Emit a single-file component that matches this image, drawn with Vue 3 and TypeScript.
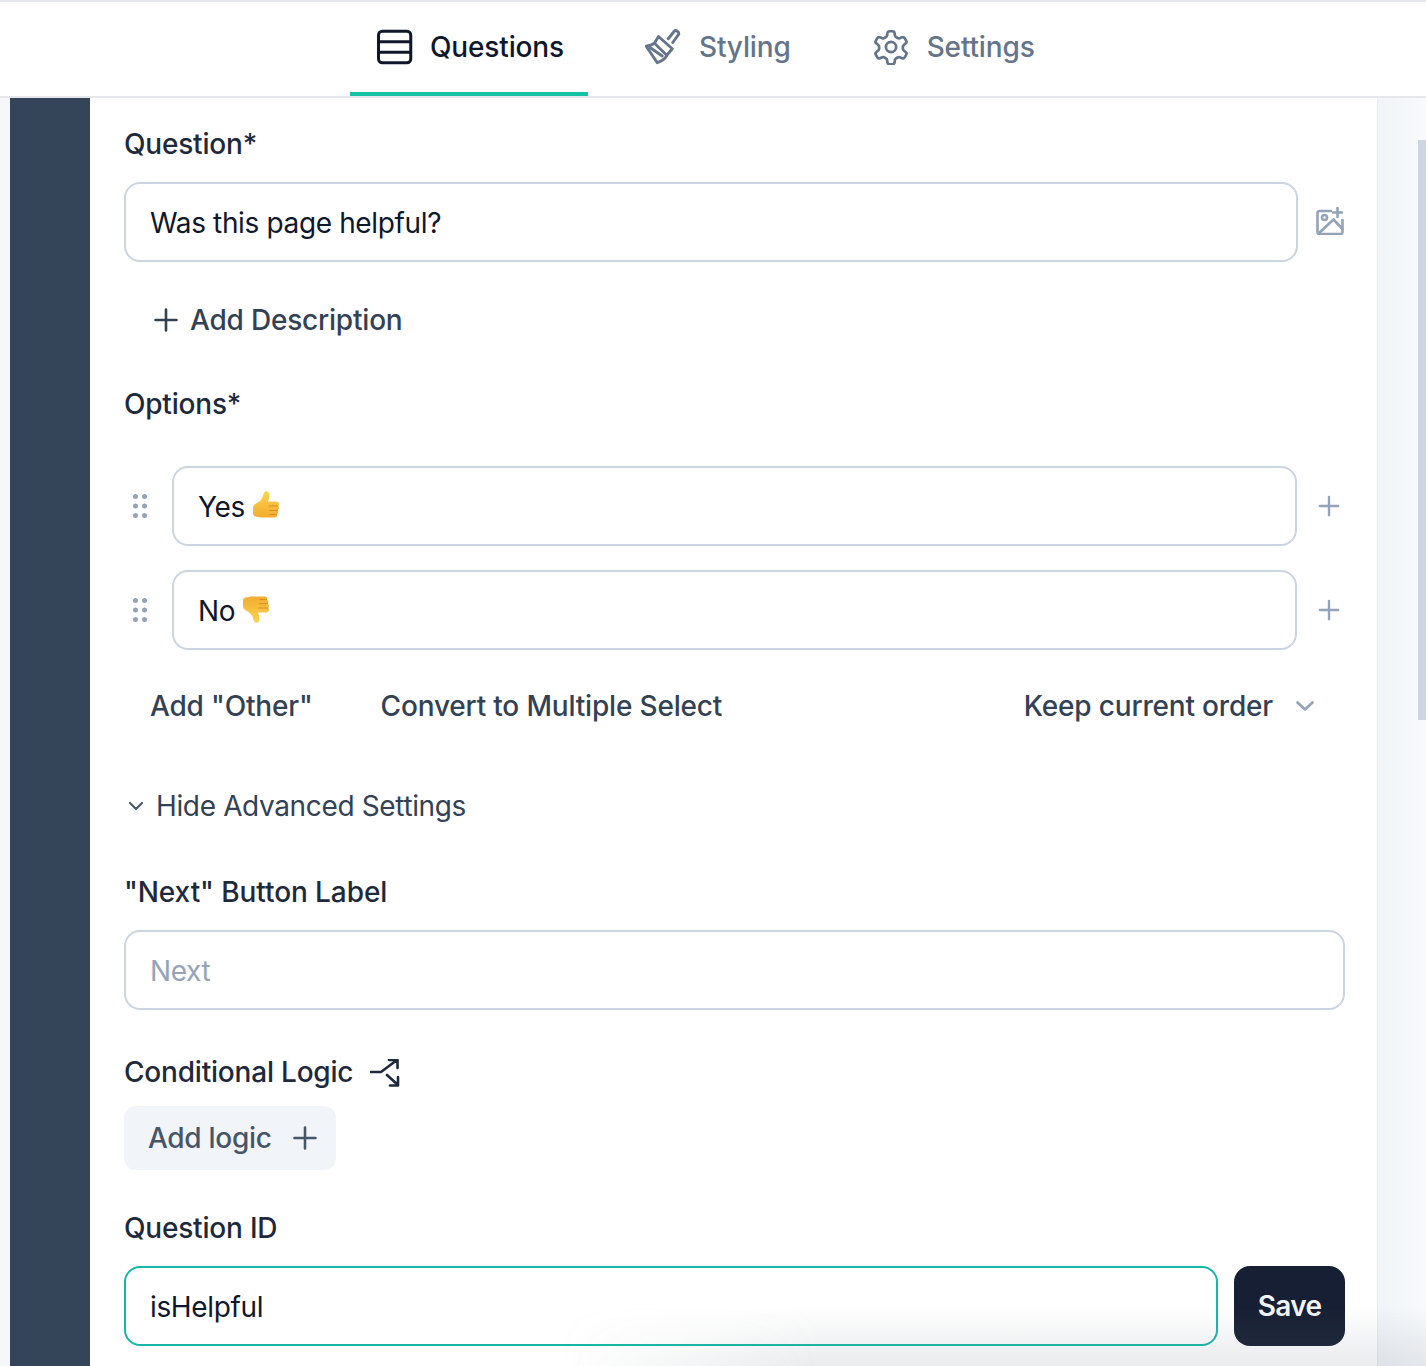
<script setup lang="ts">
import { ref } from 'vue'

interface Tab {
  name: string
  icon: string
}

const tabs: Tab[] = [
  { name: 'Questions', icon: 'rows' },
  { name: 'Styling', icon: 'brush' },
  { name: 'Settings', icon: 'gear' },
]
const activeTab = ref('Questions')

const options = [
  { label: 'Yes', up: true },
  { label: 'No', up: false },
]
</script>

<template>
  <div class="page">
    <nav class="tabs">
      <button
        v-for="tab in tabs"
        :key="tab.name"
        class="tab"
        :class="{ active: activeTab === tab.name }"
        @click="activeTab = tab.name"
      >
        <svg v-if="tab.icon === 'rows'" class="tab-icon" viewBox="0 0 24 24" fill="none" stroke="currentColor" stroke-width="2" stroke-linejoin="round">
          <rect x="1" y="1.500" width="21.500" height="21" rx="2.500" />
          <path d="M1 8.500h21.500M1 15.500h21.500" />
        </svg>
        <svg v-else-if="tab.icon === 'brush'" class="tab-icon" viewBox="0 0 24 24" fill="none" stroke="currentColor" stroke-width="1.900" stroke-linecap="round" stroke-linejoin="round">
          <path d="M15.500 6.500 19.500 1.500c1.100-1.300 3.700.6 2.800 2.300L18.500 9" />
          <path d="M9 5l9.200 8.200-3.700 4.300c-.5 1.800-2.500 3.500-6.300 5L.8 11.500C3.500 11 5.500 10 6.300 9.500z" />
          <path d="M6.300 9.500l8.200 8M3.500 12.500l8 5.500" />
        </svg>
        <svg v-else class="tab-icon" viewBox="0 0 24 24" fill="none" stroke="currentColor" stroke-width="1.800" stroke-linecap="round" stroke-linejoin="round">
          <path d="M9.600 2.800c.1-.8.8-1.300 1.500-1.300h1.800c.7 0 1.400.5 1.500 1.300l.2 1.600c.1.500.4.900.9 1.100l.9.500c.4.200.9.300 1.400.1l1.500-.6c.7-.3 1.500 0 1.900.7l.9 1.600c.4.600.2 1.400-.4 1.900l-1.200 1c-.4.300-.6.800-.6 1.300v1c0 .5.200 1 .6 1.300l1.200 1c.6.500.8 1.300.4 1.900l-.9 1.600c-.4.700-1.200 1-1.900.7l-1.500-.6c-.5-.2-1-.1-1.400.1l-.9.500c-.5.200-.8.600-.9 1.100l-.2 1.600c-.1.800-.8 1.300-1.500 1.300h-1.800c-.7 0-1.400-.5-1.500-1.300l-.2-1.600c-.1-.5-.4-.9-.9-1.100l-.9-.5c-.4-.2-.9-.3-1.400-.1l-1.500.6c-.7.300-1.500 0-1.900-.7l-.9-1.600c-.4-.6-.2-1.400.4-1.900l1.200-1c.4-.3.600-.8.600-1.300v-1c0-.5-.2-1-.6-1.300l-1.200-1c-.6-.5-.8-1.300-.4-1.900l.9-1.600c.4-.7 1.200-1 1.900-.7l1.500.6c.5.200 1 .1 1.400-.1l.9-.5c.5-.2.800-.6.900-1.100z" />
          <circle cx="12" cy="12" r="3.400" />
        </svg>
        <span>{{ tab.name }}</span>
      </button>
    </nav>

    <div class="body">
      <div class="rail"></div>
      <main class="card">
        <label class="label first">Question*</label>
        <div class="row">
          <div class="field grow">Was this page helpful?</div>
          <svg class="image-icon" viewBox="0 0 28 28" fill="none" stroke="#94a3b8" stroke-width="2.600" stroke-linecap="round" stroke-linejoin="round">
            <path d="M15 4H3.500A2 2 0 0 0 1.500 6v19a2 2 0 0 0 2 2h21a2 2 0 0 0 2-2V13" />
            <circle cx="8.500" cy="10.500" r="2.500" />
            <path d="M3 26 17.500 12.500l9 9.500M21.500 1v9M17 5.500h9" />
          </svg>
        </div>

        <div class="add-desc">
          <svg class="plus" viewBox="0 0 24 24" fill="none" stroke="currentColor" stroke-width="2.600" stroke-linecap="round">
            <path d="M12 1.500v21M1.500 12h21" />
          </svg>
          <span>Add Description</span>
        </div>

        <label class="label options-label">Options*</label>
        <div class="options">
          <div v-for="opt in options" :key="opt.label" class="option">
            <svg class="drag" viewBox="0 0 14 24" fill="#94a3b8">
              <circle cx="2.500" cy="2.500" r="2.500" />
              <circle cx="11.500" cy="2.500" r="2.500" />
              <circle cx="2.500" cy="12" r="2.500" />
              <circle cx="11.500" cy="12" r="2.500" />
              <circle cx="2.500" cy="21.500" r="2.500" />
              <circle cx="11.500" cy="21.500" r="2.500" />
            </svg>
            <div class="field grow">
              <span>{{ opt.label }}</span>
              <svg class="thumb" :class="{ down: !opt.up }" viewBox="0 0 28 30">
                <defs>
                  <linearGradient id="thumbFill" x1="0" y1="0" x2="0" y2="1">
                    <stop offset="0" stop-color="#fcd450" />
                    <stop offset="1" stop-color="#f3ac30" />
                  </linearGradient>
                </defs>
                <path d="M1 18c0-2 1-3 3-4.500C7.500 12 10.500 9 11.500 4.500 12-.5 17.500.8 17.500 5c0 2.500-.8 4.500-1.500 6.500h8c2 0 3 1 3 2.500 0 1-.4 1.600-1 2 .6.500 1 1.200 1 2 0 1-.5 1.700-1.200 2.100.4.500.6 1 .6 1.600 0 1-.6 1.800-1.400 2.200.2.300.3.700.3 1.100 0 1.500-1 2.500-2.800 2.500H10c-2 0-3-.8-5-.8-2.500 0-4-1.500-4-3.700z" fill="url(#thumbFill)" />
                <path d="M17 16h9M17.500 20.300h8M18 24.400h6.500" stroke="#d98a1f" stroke-width="1" fill="none" stroke-linecap="round" />
              </svg>
            </div>
            <svg class="plus small" viewBox="0 0 24 24" fill="none" stroke="#94a3b8" stroke-width="2.600" stroke-linecap="round">
              <path d="M12 2v20M2 12h20" />
            </svg>
          </div>
        </div>

        <div class="option-actions">
          <span class="other">Add "Other"</span>
          <span class="convert">Convert to Multiple Select</span>
          <span class="order">
            Keep current order
            <svg class="order-chevron" viewBox="0 0 18 10" fill="none" stroke="#94a3b8" stroke-width="2.600" stroke-linecap="round" stroke-linejoin="round">
              <path d="m1.500 1.500 7.500 7 7.500-7" />
            </svg>
          </span>
        </div>

        <div class="advanced">
          <svg class="adv-chevron" viewBox="0 0 14 8" fill="none" stroke="#475569" stroke-width="2" stroke-linecap="round" stroke-linejoin="round">
            <path d="m1 1 6 6 6-6" />
          </svg>
          <span>Hide Advanced Settings</span>
        </div>

        <label class="label next-label">"Next" Button Label</label>
        <div class="field wide placeholder">Next</div>

        <div class="label logic-label">
          <span>Conditional Logic</span>
          <svg class="split" viewBox="0 0 30 28" fill="none" stroke="#1e293b" stroke-width="2.600" stroke-linecap="round" stroke-linejoin="round">
            <path d="M1 13h10l16-12M19 1h8.500v8M17 16l11 10M28 18v8.500h-8" />
          </svg>
        </div>
        <button class="add-logic">
          <span>Add logic</span>
          <svg class="plus" viewBox="0 0 24 24" fill="none" stroke="currentColor" stroke-width="2.600" stroke-linecap="round">
            <path d="M12 1.500v21M1.500 12h21" />
          </svg>
        </button>

        <label class="label id-label">Question ID</label>
        <div class="id-row">
          <div class="field grow focus">isHelpful</div>
          <button class="save">Save</button>
        </div>
      </main>
      <div class="gutter">
        <div class="scroll-thumb"></div>
      </div>
    </div>
    <div class="fade"></div>
  </div>
</template>

<style>
body {
  margin: 0;
  overflow: hidden;
}
</style>

<style scoped>
.page {
  position: relative;
  width: 1426px;
  height: 1366px;
  overflow: hidden;
  background: #f5f7fa;
  font-family: Inter, "Liberation Sans", sans-serif;
  font-size: 28px;
  letter-spacing: -0.36px;
  color: #1e293b;
}

.tabs {
  box-sizing: border-box;
  height: 98px;
  padding-left: 350px;
  display: flex;
  background: #fff;
  border-top: 2px solid #e5e7eb;
  border-bottom: 2px solid #e5e7eb;
}

.tab {
  display: flex;
  align-items: center;
  gap: 18px;
  height: 94px;
  margin-bottom: -2px;
  padding: 0 24px 0 27px;
  border: 0;
  border-bottom: 4px solid transparent;
  background: none;
  font: inherit;
  font-weight: 500;
  color: #64748b;
  letter-spacing: -0.15px;
}

.tab.active {
  gap: 17px;
  color: #0f172a;
  border-bottom-color: #14c2a3;
}

.tab:nth-child(2) {
  padding-left: 57px;
}

.tab:nth-child(3) {
  padding-left: 58px;
}

.tab-icon {
  width: 36px;
  height: 36px;
}

.body {
  display: flex;
  height: 1268px;
}

.rail {
  width: 80px;
  margin-left: 10px;
  background: #344559;
}

.card {
  box-sizing: border-box;
  width: 1288px;
  padding: 0 32px 0 34px;
  background: #fff;
  border-right: 1px solid #e8ebf0;
}

.gutter {
  position: relative;
  flex: 1;
  background: linear-gradient(90deg, #f1f4f8, #f8fafc);
}

.scroll-thumb {
  position: absolute;
  top: 42px;
  left: 40px;
  width: 8px;
  height: 580px;
  background: #cfd6e1;
}

.label {
  display: block;
  font-weight: 500;
  line-height: 36px;
  letter-spacing: -0.2px;
  color: #1e293b;
}

.first {
  margin-top: 28px;
}

.row {
  display: flex;
  align-items: center;
  margin-top: 20px;
}

.field {
  box-sizing: border-box;
  display: flex;
  align-items: center;
  height: 80px;
  padding: 2px 24px 0;
  border: 2px solid #cbd5e1;
  border-radius: 16px;
  background: #fff;
  color: #0f172a;
}

.grow {
  flex: 1;
}

.row .field {
  flex: 0 0 1174px;
}

.image-icon {
  width: 28px;
  height: 28px;
  margin: -2px 0 0 18px;
}

.add-desc {
  display: flex;
  align-items: center;
  gap: 12px;
  height: 36px;
  margin: 40px 0 0 30px;
  font-weight: 500;
  letter-spacing: -0.2px;
  color: #334155;
}

.plus {
  width: 24px;
  height: 24px;
}

.options-label {
  margin-top: 48px;
}

.options {
  display: flex;
  flex-direction: column;
  gap: 24px;
  margin-top: 44px;
}

.option {
  display: flex;
  align-items: center;
}

.drag {
  width: 14px;
  height: 24px;
  margin: 0 25px 0 9px;
}

.option .field {
  flex: 0 0 1125px;
  gap: 7px;
}

.thumb {
  width: 28px;
  height: 30px;
  margin-top: -4px;
}

.thumb.down {
  transform: rotate(180deg) scaleX(-1);
}

.plus.small {
  width: 22px;
  height: 22px;
  margin-left: 21px;
}

.option-actions {
  display: flex;
  align-items: center;
  height: 36px;
  margin-top: 38px;
  padding-left: 26px;
  font-weight: 500;
  letter-spacing: -0.18px;
  color: #334155;
}

.convert {
  margin-left: 68px;
}

.order {
  display: flex;
  align-items: center;
  margin-left: auto;
  margin-right: 31px;
}

.order-chevron {
  width: 18px;
  height: 10px;
  margin-left: 23px;
}

.advanced {
  display: flex;
  align-items: center;
  gap: 13px;
  height: 36px;
  margin: 64px 0 0 5px;
  color: #334155;
}

.adv-chevron {
  width: 14px;
  height: 8px;
}

.next-label {
  margin-top: 50px;
  letter-spacing: -0.08px;
}

.wide {
  margin-top: 20px;
}

.placeholder {
  color: #94a3b8;
}

.logic-label {
  display: flex;
  align-items: center;
  gap: 17px;
  margin-top: 44px;
}

.split {
  width: 30px;
  height: 28px;
  margin-top: 2px;
}

.add-logic {
  display: flex;
  align-items: center;
  gap: 21px;
  height: 64px;
  margin-top: 16px;
  padding: 0 19px 0 24px;
  border: 0;
  border-radius: 12px;
  background: #f1f5f9;
  font: inherit;
  font-weight: 500;
  letter-spacing: -0.3px;
  color: #475569;
}

.id-label {
  margin-top: 40px;
}

.id-row {
  display: flex;
  gap: 16px;
  margin-top: 20px;
}

.focus {
  border-color: #14b8a6;
}

.save {
  width: 111px;
  height: 80px;
  border: 0;
  border-radius: 16px;
  background: #161f33;
  font: inherit;
  font-weight: 600;
  letter-spacing: -0.7px;
  color: #f1f5f9;
}

.fade {
  position: absolute;
  left: 560px;
  right: 0;
  bottom: 0;
  height: 60px;
  pointer-events: none;
  background: linear-gradient(180deg, rgba(120, 130, 140, 0), rgba(120, 130, 140, 0.16));
  -webkit-mask-image: linear-gradient(90deg, transparent, #000 30%);
  mask-image: linear-gradient(90deg, transparent, #000 30%);
}
</style>
